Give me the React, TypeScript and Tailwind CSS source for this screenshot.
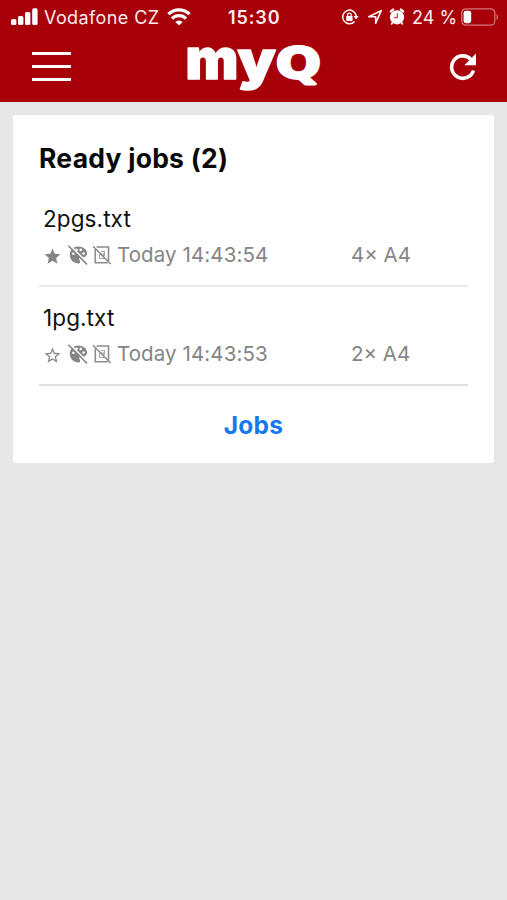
import { MdStar, MdStarBorder } from "react-icons/md";

type Job = {
  name: string;
  time: string;
  pages: string;
  starred: boolean;
};

const jobs: Job[] = [
  { name: "2pgs.txt", time: "Today 14:43:54", pages: "4× A4", starred: true },
  { name: "1pg.txt", time: "Today 14:43:53", pages: "2× A4", starred: false },
];

function SignalIcon() {
  return (
    <svg className="h-[18px] w-[28px] shrink-0" viewBox="0 0 28 18" fill="white">
      <rect x="1" y="11" width="5.4" height="6" rx="1.6" />
      <rect x="8" y="8" width="5.4" height="9" rx="1.6" />
      <rect x="15" y="4" width="5.4" height="13" rx="1.6" />
      <rect x="22.2" y="0.3" width="5.4" height="16.7" rx="1.6" />
    </svg>
  );
}

function WifiIcon() {
  return (
    <svg className="h-[18px] w-[24px] shrink-0" viewBox="0 0 24 18" fill="none" stroke="white" strokeWidth="3.2">
      <path d="M1.4 6.2a15 15 0 0 1 21.2 0" />
      <path d="M5 10.6a9.9 9.9 0 0 1 14 0" />
      <path d="M12 17.6 8.3 13.9a5.3 5.3 0 0 1 7.4 0z" fill="white" stroke="none" />
    </svg>
  );
}

function RotationLockIcon() {
  return (
    <svg className="h-[18px] w-[18px] shrink-0" viewBox="0 0 18 18" fill="none" stroke="white" strokeWidth="1.5">
      <path d="M13.6 13.4A6.8 6.8 0 1 1 15.2 8" />
      <path d="M12.4 8h5.4l-2.7 3.6z" fill="white" stroke="none" />
      <rect x="5.2" y="8" width="6.4" height="5" rx="0.8" fill="white" stroke="none" />
      <path d="M6.6 8.5V6.9a1.8 1.8 0 0 1 3.6 0v1.6" strokeWidth="1.3" />
    </svg>
  );
}

function LocationIcon() {
  return (
    <svg className="h-[16px] w-[16px] shrink-0" viewBox="0 0 16 16" fill="none" stroke="white" strokeWidth="1.6" strokeLinejoin="round">
      <path d="M14.2 1.6 8.7 14.2V7.8H1.8z" />
    </svg>
  );
}

function AlarmIcon() {
  return (
    <svg className="h-[18px] w-[16px] shrink-0" viewBox="0 0 16 18">
      <path d="M1.9 3.4 4 1.6M14.1 3.4 12 1.6" stroke="white" strokeWidth="2.4" strokeLinecap="round" />
      <path d="M3.6 14.5 2.6 16M12.4 14.5l1 1.5" stroke="white" strokeWidth="1.6" strokeLinecap="round" />
      <circle cx="8" cy="9.3" r="7.1" fill="white" />
      <path d="M8.3 5.2v4.6H4.8" fill="none" stroke="#a70009" strokeWidth="0.9" />
    </svg>
  );
}

function BatteryIcon() {
  return (
    <svg className="h-[18px] w-[38px] shrink-0" viewBox="0 0 38 18">
      <rect x="0.8" y="0.8" width="33" height="16.4" rx="4.2" fill="none" stroke="#d5747a" strokeWidth="1.3" />
      <rect x="2.6" y="2.8" width="7.6" height="12.4" rx="2.4" fill="white" />
      <path d="M35.6 6c2 .6 2 5.4 0 6z" fill="#d5747a" />
    </svg>
  );
}

function StatusBar() {
  return (
    <div className="flex h-[34px] items-center justify-between pl-[10px] pr-[8px] text-[18px] text-[#ffecec]">
      <div className="flex w-[218px] items-center">
        <SignalIcon />
        <span className="ml-[6px] w-[123px] whitespace-nowrap tracking-[0.4px]">Vodafone CZ</span>
        <WifiIcon />
      </div>
      <span className="mr-auto font-semibold tracking-[0.9px]">15:30</span>
      <div className="flex items-center">
        <RotationLockIcon />
        <span className="w-[8px]" />
        <LocationIcon />
        <span className="w-[6px]" />
        <AlarmIcon />
        <span className="ml-[7px] w-[49px] whitespace-nowrap">24 %</span>
        <BatteryIcon />
      </div>
    </div>
  );
}

function Logo() {
  return (
    <svg
      className="h-[48px] w-[140px] overflow-visible font-['Inter',sans-serif] font-black"
      viewBox="0 0 140 48"
      fill="white"
      stroke="white"
      strokeLinejoin="round"
      aria-label="myQ"
    >
      <text transform="translate(-4.6 36)" fontSize="56" strokeWidth="1.5">m</text>
      <text transform="translate(47.6 35.5) scale(1.04 0.9)" fontSize="58" strokeWidth="1.5">y</text>
      <text
        className="font-['DejaVu_Sans',sans-serif] font-bold"
        transform="translate(86 35.3) scale(1.27 1.01)"
        fontSize="41.5"
        strokeWidth="2.8"
      >
        Q
      </text>
    </svg>
  );
}

function RefreshIcon() {
  return (
    <svg className="h-[28px] w-[28px]" viewBox="0 0 28 28">
      <path d="M21.8 6.2A11.2 11.2 0 1 0 24.5 17.5" fill="none" stroke="white" strokeWidth="3.6" />
      <path d="M27 0.500v11.700H15.300z" fill="white" />
    </svg>
  );
}

function Header() {
  return (
    <header className="h-[102px] bg-[#a70009]">
      <StatusBar />
      <div className="flex h-[65px] items-center justify-between pl-[32px] pr-[30px]">
        <button className="flex w-[39px] flex-col gap-[10px]" aria-label="Menu">
          <span className="h-[3px] w-full bg-white" />
          <span className="h-[3px] w-full bg-white" />
          <span className="h-[3px] w-full bg-white" />
        </button>
        <Logo />
        <button aria-label="Refresh">
          <RefreshIcon />
        </button>
      </div>
    </header>
  );
}

function NoColorIcon() {
  return (
    <svg className="h-[20px] w-[20px]" viewBox="0 0 20 20">
      <path
        d="M10.2 1.5a8.3 8.3 0 0 0 0 17c1.3 0 2-.9 2-1.8 0-1.3-1-1.5-1-2.7 0-.8.6-1.4 1.5-1.4h2c2.5 0 4.3-1.7 4.3-4.2 0-4-4-6.9-8.8-6.9z"
        fill="#858585"
      />
      <g fill="white">
        <circle cx="8.5" cy="4.9" r="1.3" />
        <circle cx="12.7" cy="4.9" r="1.3" />
        <circle cx="15.6" cy="8.5" r="1.3" />
        <circle cx="5.4" cy="8.7" r="1.3" />
      </g>
      <path d="M1.6 0 20 18.4" stroke="white" strokeWidth="1.6" />
      <path d="M.4.8 19 19.4" stroke="#858585" strokeWidth="1.5" />
    </svg>
  );
}

function NoStapleIcon() {
  return (
    <svg className="h-[20px] w-[20px]" viewBox="0 0 20 20" fill="none" stroke="#8c8c8c" strokeWidth="1.6">
      <path d="M4.5 2h12v14M3.3 4.5v13.3h12.4" />
      <path d="M7.5 9v4.5H12M9 6.5h3.5V11" strokeWidth="1.1" stroke="#a8a8a8" />
      <path d="M9 9h2.5v2.5" strokeWidth="1.2" stroke="#a8a8a8" />
      <path d="M1 1.2 18.6 19" />
    </svg>
  );
}

function JobRow({ job }: { job: Job }) {
  return (
    <li className="h-[99px] border-b-2 border-[#e9e9e9] pl-[4px] pt-[17px] last:border-[#dfdfdf]">
      <div className="text-[22.5px] leading-[28px] tracking-[0.1px] text-[#111]">{job.name}</div>
      <div className="mt-[9px] flex h-[26px] items-center text-[20.5px] text-[#858585]">
        {job.starred ? (
          <MdStar className="mt-[3px] size-[19px]" />
        ) : (
          <MdStarBorder className="mt-[3px] size-[19px]" />
        )}
        <span className="ml-[6px]"><NoColorIcon /></span>
        <span className="ml-[4px]"><NoStapleIcon /></span>
        <span className="ml-[5px] w-[234px] whitespace-nowrap tracking-[0.1px]">{job.time}</span>
        <span className="whitespace-nowrap">{job.pages}</span>
      </div>
    </li>
  );
}

export default function App() {
  return (
    <div className="h-[900px] w-[507px] overflow-hidden bg-[#e7e7e7] font-['Inter',sans-serif]">
      <Header />
      <main className="mx-[13px] mt-[13px] h-[348px] rounded-[3px] bg-white px-[26px] pt-[27px]">
        <h1 className="text-[26.5px] font-bold leading-[32px] tracking-[0.25px] text-[#090909]">Ready jobs (2)</h1>
        <ul className="mt-[14px]">
          {jobs.map((job) => (
            <JobRow key={job.name} job={job} />
          ))}
        </ul>
        <a className="mt-[23px] block text-center text-[24.5px] font-bold leading-[32px] tracking-[0.3px] text-[#1479ee]" href="#jobs">
          Jobs
        </a>
      </main>
    </div>
  );
}
